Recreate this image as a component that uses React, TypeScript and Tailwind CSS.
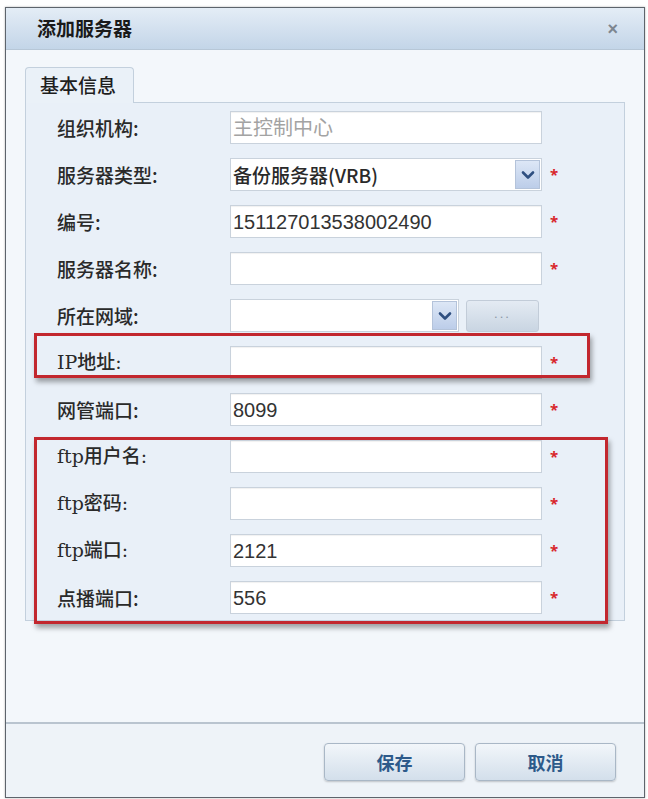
import React from "react";

const CJK = "font-['Noto_Sans_CJK_SC','Liberation_Sans',sans-serif]";
const SERIF_MIX = "font-['DejaVu_Serif','Noto_Sans_CJK_SC',serif]";

function Star({ show = true }: { show?: boolean }) {
  return (
    <span className="ml-[8px] w-[10px] text-[15px] font-bold leading-none text-[#d8262c]">
      {show ? "*" : ""}
    </span>
  );
}

function Label({ text, serif = false }: { text: string; serif?: boolean }) {
  return (
    <div
      className={`w-[204px] shrink-0 pl-[31px] text-[19px] font-medium leading-none text-[#2a2a2a] ${
        serif ? SERIF_MIX : CJK
      }`}
    >
      {text}
    </div>
  );
}

function TextBox({ value = "", muted = false }: { value?: string; muted?: boolean }) {
  return (
    <div
      className={`flex h-[33px] w-[312px] items-center border border-[#c9d2dc] bg-white px-[2px] text-[20px] leading-none shadow-[inset_0_1px_1px_rgba(0,0,0,0.06)] font-['Liberation_Sans','Noto_Sans_CJK_SC',sans-serif] ${
        muted ? "text-[#a3a3a3] text-[19px]" : "text-[#333333]"
      }`}
    >
      {value}
    </div>
  );
}

function Chevron() {
  return (
    <svg width="14" height="10" viewBox="0 0 14 10">
      <path d="M2 2.5 L7 7.5 L12 2.5" fill="none" stroke="#2f4f80" strokeWidth="2.6" strokeLinecap="round" strokeLinejoin="round" />
    </svg>
  );
}

function SelectBox({ value = "", width }: { value?: string; width: string }) {
  return (
    <div
      className={`flex h-[33px] ${width} items-center border border-[#c9d2dc] bg-white pl-[2px] text-[19px] font-medium leading-none text-[#2a2a2a] font-['Noto_Sans_CJK_SC','Liberation_Sans',sans-serif]`}
    >
      <span className="flex-1">{value}</span>
      <span className="mr-[1px] flex h-[29px] w-[25px] items-center justify-center border border-[#b4c3da] bg-gradient-to-b from-[#dde7f6] to-[#bccde9]">
        <Chevron />
      </span>
    </div>
  );
}

function Row({ children }: { children: React.ReactNode }) {
  return <div className="flex h-[33px] items-center">{children}</div>;
}

function FooterButton({ text }: { text: string }) {
  return (
    <button
      className={`flex h-[38px] w-[141px] items-center justify-center rounded-[4px] border border-[#a9b7c6] bg-gradient-to-b from-[#f2f6fa] to-[#d3dfeb] text-[18px] font-bold text-[#2d5a8a] shadow-[0_1px_2px_rgba(0,0,0,0.2)] ${CJK}`}
    >
      {text}
    </button>
  );
}

export default function App() {
  return (
    <div className="h-[799px] w-[648px] bg-white pl-[5px] pt-[7px]">
      <div className="flex h-[791px] w-[640px] flex-col border border-[#5d646c] bg-[#f3f7fb] shadow-[0_0_2px_rgba(0,0,0,0.3)]">
        {/* title bar */}
        <div className="flex h-[42px] shrink-0 items-center justify-between border-b border-[#b7c7d7] bg-gradient-to-b from-[#e4edf6] to-[#c3d5e8] pl-[31px] pr-[26px]">
          <span className={`text-[19px] font-bold text-[#1a1a1a] ${CJK}`}>添加服务器</span>
          <span className="text-[18px] font-bold leading-none text-[#7d8690] font-['Liberation_Sans',sans-serif]">×</span>
        </div>

        {/* body */}
        <div className="flex flex-1 flex-col px-[19px] pt-[17px]">
          {/* tab strip */}
          <div className="flex h-[35px] shrink-0">
            <div
              className={`relative z-10 -mb-px flex w-[109px] items-center rounded-t-[4px] border border-b-0 border-[#c3d0dd] bg-[#eaf1f8] pl-[14px] text-[19px] font-medium text-[#1e1e1e] ${CJK}`}
            >
              基本信息
            </div>
          </div>

          {/* panel */}
          <div className="flex h-[519px] w-[600px] flex-col gap-[14px] border border-[#c3d0dd] bg-[#e9f0f8] pt-[8px]">
            <Row>
              <Label text="组织机构:" />
              <TextBox value="主控制中心" muted />
            </Row>
            <Row>
              <Label text="服务器类型:" />
              <SelectBox value="备份服务器(VRB)" width="w-[312px]" />
              <Star />
            </Row>
            <Row>
              <Label text="编号:" />
              <TextBox value="151127013538002490" />
              <Star />
            </Row>
            <Row>
              <Label text="服务器名称:" />
              <TextBox />
              <Star />
            </Row>
            <Row>
              <Label text="所在网域:" />
              <SelectBox width="w-[229px]" />
              <span className="ml-[7px] flex h-[32px] w-[73px] items-center justify-center rounded-[3px] border border-[#c2ccd8] bg-gradient-to-b from-[#e4ebf3] to-[#c9d5e2] pb-[4px] text-[13px] tracking-[2px] text-[#8a96a4] font-['Liberation_Sans',sans-serif]">
                ...
              </span>
            </Row>
            <div className="relative">
              <Row>
                <Label text="IP地址:" serif />
                <TextBox />
                <Star />
              </Row>
              <div className="pointer-events-none absolute left-[8px] top-[-13px] h-[45px] w-[556px] border-[3px] border-[#c2272e] shadow-[2px_4px_5px_rgba(0,0,0,0.35)]" />
            </div>
            <Row>
              <Label text="网管端口:" />
              <TextBox value="8099" />
              <Star />
            </Row>
            <div className="relative flex flex-col gap-[14px]">
              <Row>
                <Label text="ftp用户名:" serif />
                <TextBox />
                <Star />
              </Row>
              <Row>
                <Label text="ftp密码:" serif />
                <TextBox />
                <Star />
              </Row>
              <Row>
                <Label text="ftp端口:" serif />
                <TextBox value="2121" />
                <Star />
              </Row>
              <Row>
                <Label text="点播端口:" />
                <TextBox value="556" />
                <Star />
              </Row>
              <div className="pointer-events-none absolute left-[8px] top-[-3px] h-[187px] w-[574px] border-[3px] border-[#c2272e] shadow-[2px_4px_5px_rgba(0,0,0,0.35)]" />
            </div>
          </div>
        </div>

        {/* footer */}
        <div className="flex h-[75px] shrink-0 items-start justify-end gap-[10px] border-t-2 border-[#b9c4cf] bg-[#eef3f8] pr-[28px] pt-[19px]">
          <FooterButton text="保存" />
          <FooterButton text="取消" />
        </div>
      </div>
    </div>
  );
}
